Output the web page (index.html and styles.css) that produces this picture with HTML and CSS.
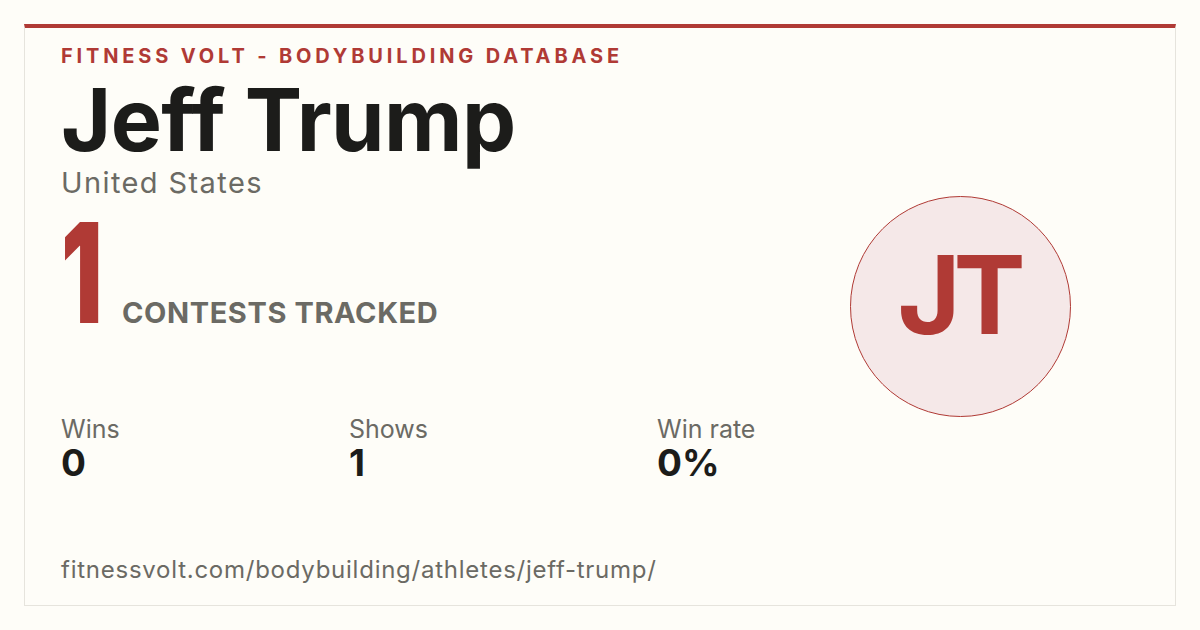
FILE: index.html
```html
<!DOCTYPE html>
<html lang="en">
<head>
<meta charset="utf-8">
<title>Jeff Trump - Fitness Volt</title>
<link rel="stylesheet" href="styles.css">
</head>
<body>
<div class="card">
  <div class="main">
    <div class="brand">FITNESS VOLT - BODYBUILDING DATABASE</div>
    <h1 class="name">Jeff Trump</h1>
    <div class="country">United States</div>
    <div class="count">
      <span class="count-num">1</span>
      <span class="count-label">CONTESTS TRACKED</span>
    </div>
    <div class="stats">
      <div class="stat stat-wins">
        <div class="stat-label">Wins</div>
        <div class="stat-value">0</div>
      </div>
      <div class="stat stat-shows">
        <div class="stat-label">Shows</div>
        <div class="stat-value">1</div>
      </div>
      <div class="stat stat-rate">
        <div class="stat-label">Win rate</div>
        <div class="stat-value">0%</div>
      </div>
    </div>
    <div class="url">fitnessvolt.com/bodybuilding/athletes/jeff-trump/</div>
  </div>
  <div class="side">
    <div class="avatar"><span class="avatar-text">JT</span></div>
  </div>
</div>
</body>
</html>
```
FILE: styles.css
```css
html, body {
  margin: 0;
  padding: 0;
}
body {
  width: 1200px;
  height: 630px;
  background: #fefdf8;
  font-family: Inter, "Noto Sans", "Liberation Sans", sans-serif;
  padding: 24px;
  box-sizing: border-box;
}
.card {
  box-sizing: border-box;
  width: 1152px;
  height: 582px;
  border: 1px solid #e6e4dd;
  border-top: 4px solid #b03a35;
  background: #fefdf8;
  display: flex;
  padding: 14px 36px 0 36px;
}
.main {
  flex: 1;
  display: flex;
  flex-direction: column;
}
.brand {
  color: #b03a35;
  font-weight: 700;
  font-size: 20px;
  letter-spacing: 3.85px;
  line-height: 28px;
}
.name {
  margin: 0;
  font-size: 86px;
  font-weight: 700;
  color: #1c1c1a;
  letter-spacing: -0.6px;
  line-height: 100px;
}
.country {
  font-size: 29px;
  color: #6b6a64;
  line-height: 32px;
  margin-top: -3px;
  letter-spacing: 1.4px;
}
.count {
  display: flex;
  align-items: baseline;
  gap: 15px;
  margin-top: 4px;
}
.count-num {
  display: inline-block;
  width: 46px;
  color: #b03a35;
  font-size: 139px;
  font-weight: 900;
  line-height: 140px;
  letter-spacing: 0;
  transform: scaleX(0.66);
  transform-origin: left bottom;
}
.count-label {
  color: #6b6a64;
  font-size: 29px;
  font-weight: 700;
  letter-spacing: 0.6px;
}
.stats {
  display: grid;
  grid-template-columns: 288px 308px 200px;
  margin-top: 72px;
}
.stat-label {
  font-size: 25px;
  color: #6b6a64;
  line-height: 28px;
}
.stat-value {
  font-size: 37px;
  font-weight: 700;
  color: #1c1c1a;
  line-height: 40px;
}
.url {
  margin-top: auto;
  margin-bottom: 20px;
  font-size: 24px;
  color: #6b6a64;
  line-height: 30px;
  letter-spacing: 0.75px;
}
.side {
  width: 300px;
  display: flex;
  justify-content: center;
  align-items: flex-start;
  padding-top: 154px;
  padding-right: 94px;
  box-sizing: border-box;
}
.avatar {
  flex: none;
  width: 221px;
  height: 221px;
  box-sizing: border-box;
  border-radius: 50%;
  border: 1.5px solid #b03a35;
  background: #f5e8e8;
  color: #b03a35;
  display: flex;
  align-items: center;
  justify-content: center;
}
.avatar-text {
  font-size: 108px;
  font-weight: 700;
  letter-spacing: -7px;
  line-height: 1;
  margin-top: -23px;
  margin-right: 4px;
}
```
